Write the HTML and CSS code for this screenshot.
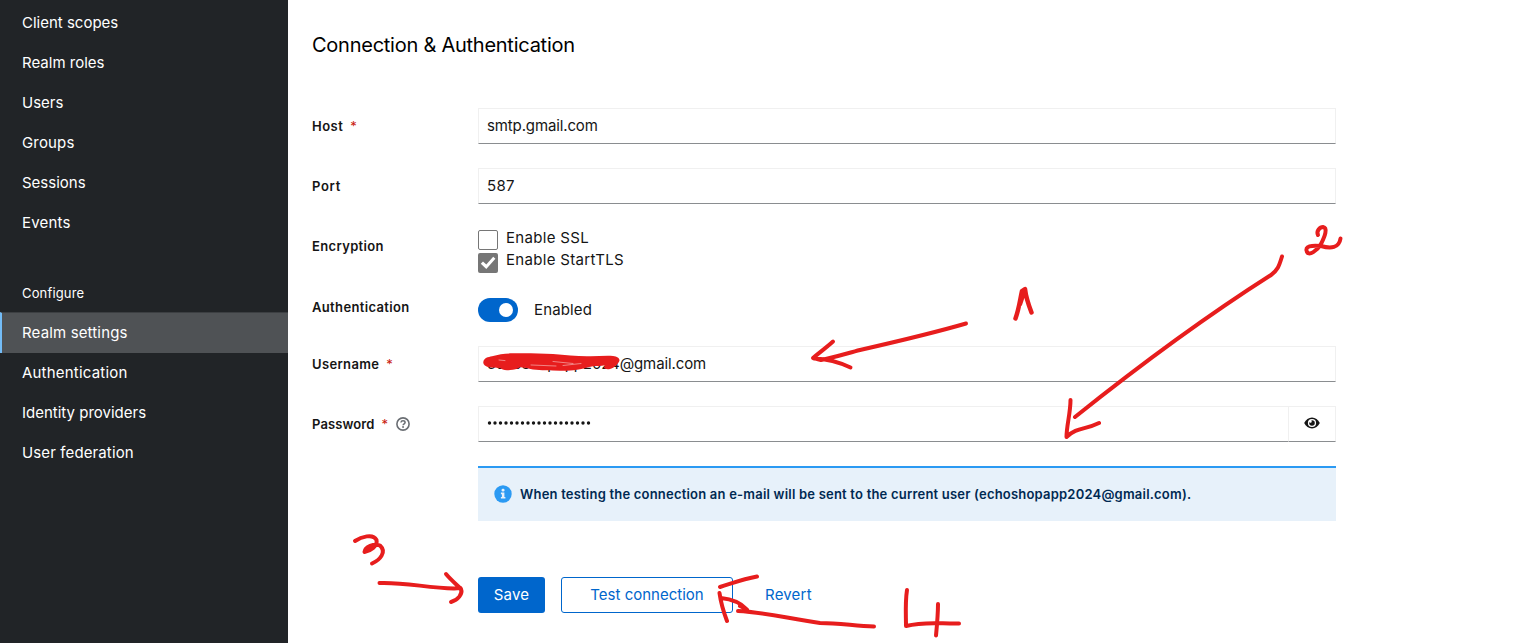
FILE: index.html
```html
<!DOCTYPE html>
<html lang="en">
<head>
<meta charset="utf-8">
<title>Realm settings</title>
<link rel="stylesheet" href="styles.css">
</head>
<body>
<div class="page">
  <nav class="sidebar">
    <a class="nav-item">Client scopes</a>
    <a class="nav-item">Realm roles</a>
    <a class="nav-item">Users</a>
    <a class="nav-item t-groups">Groups</a>
    <a class="nav-item">Sessions</a>
    <a class="nav-item t-events">Events</a>
    <h2 class="nav-title">Configure</h2>
    <a class="nav-item active t-settings">Realm settings</a>
    <a class="nav-item t-auth">Authentication</a>
    <a class="nav-item">Identity providers</a>
    <a class="nav-item t-fed">User federation</a>
  </nav>
  <main class="content">
    <h1 class="heading">Connection &amp; Authentication</h1>
    <form class="form">
      <div class="row">
        <div class="label"><span class="t-host">Host</span><span class="req">*</span></div>
        <div class="field"><span class="t-smtp">smtp.gmail.com</span></div>
      </div>
      <div class="row">
        <div class="label"><span class="t-port">Port</span></div>
        <div class="field"><span class="t-port-value">587</span></div>
      </div>
      <div class="row encryption">
        <div class="label"><span class="t-label">Encryption</span></div>
        <div class="checks">
          <div class="check"><span class="box"></span><span class="check-text">Enable SSL</span></div>
          <div class="check"><span class="box checked"><svg viewBox="0 0 20 20" width="20" height="20"><path d="M2.800 10.800l2.200-2.300 3.300 3.100 6.900-7.800 2.200 2-9.100 10.200z" fill="#fff"/></svg></span><span class="check-text">Enable StartTLS</span></div>
        </div>
      </div>
      <div class="row auth">
        <div class="label"><span class="t-label">Authentication</span></div>
        <div class="switch-line"><span class="switch"><span class="knob"></span></span><span class="t-enabled">Enabled</span></div>
      </div>
      <div class="row">
        <div class="label"><span class="t-label">Username</span><span class="req">*</span></div>
        <div class="field"><span class="t-mail">echoshopapp2024@gmail.com</span></div>
      </div>
      <div class="row">
        <div class="label"><span class="t-pass">Password</span><span class="req">*</span>
          <svg class="help" viewBox="0 0 14 14" width="14" height="14"><circle cx="7" cy="7" r="6.100" fill="none" stroke="#6a6e73" stroke-width="1.600"/><path d="M4.900 5.500C5.100 4.300 6 3.800 7 3.800c1.200 0 2.100.7 2.100 1.700C9.100 6.800 7.100 6.800 7.100 8.200" fill="none" stroke="#6a6e73" stroke-width="1.500"/><circle cx="7.050" cy="10" r=".95" fill="#6a6e73"/></svg>
        </div>
        <div class="password">
          <div class="field"><svg class="dots" width="106" height="4" viewBox="0 0 106 4"><path d="M2.500 2H105" stroke="#151515" stroke-width="3.400" stroke-linecap="round" stroke-dasharray="0 5.500"/></svg></div>
          <div class="reveal"><svg viewBox="0 0 16 12" width="16" height="12"><path d="M.2 6C1.800 2.700 4.700.6 8 .6s6.200 2.100 7.800 5.400c-1.600 3.300-4.500 5.400-7.800 5.400S1.800 9.300.2 6z" fill="#151515"/><circle cx="8" cy="6" r="4.100" fill="#fff"/><path d="M8 3.200A2.800 2.800 0 1 1 5.200 6c0-.3 0-.5.1-.7.3.3.7.4 1.100.4.8 0 1.300-.6 1.300-1.300 0-.5-.1-.8-.4-1.100z" fill="#151515"/></svg></div>
        </div>
      </div>
      <div class="alert">
        <svg class="info" viewBox="0 0 18 18" width="18" height="18"><circle cx="9" cy="9" r="8.700" fill="#2b9af3"/><rect x="7.600" y="3.700" width="2.900" height="2.800" rx="1.200" fill="#e7f1fa"/><path d="M6.900 7.500h3.500v4.400h1v1.700H6.900v-1.700h1V9.200h-1z" fill="#e7f1fa"/></svg>
        <span class="t-alert">When testing the connection an e-mail will be sent to the current user (echoshopapp2024@gmail.com).</span>
      </div>
      <div class="actions">
        <button type="button" class="btn primary">Save</button>
        <button type="button" class="btn secondary">Test connection</button>
        <button type="button" class="btn link">Revert</button>
      </div>
    </form>
  </main>
  <svg class="ink" viewBox="0 0 1533 643" width="1533" height="643">
    <path class="blob" d="M483.300 362C484 358 488 357 492 356.300C499 354 505 353.500 513 353.300C526 353 540 353.300 553 354C565 355 576 356 587 356.200C596 356.500 605 355.500 613 356C617 356.500 619.500 358 619.500 360.500C619 363 614 368.500 610 369C607 369.500 604 369 604 367.300L605 365.300C601 366 597 366 593 366.200C588 367 583 369 577 369.700C571 370.500 566 371 560 370.700C550 370.500 541 370.500 533 369.500C528 368.500 524 367.500 520 367.300C517 369 514 370 510 370C505 371 502 369.500 500 368C496 367.500 492 368 488 367C485 366 483 364.500 483.300 362Z"/>
    <g class="wisps"><path d="M499 360l6 .6M531 365l25 1M553 361.500l20 2M563 365.500l18-2"/></g>
    <path d="M966 323.500C930 334 895 342 860 350C845 354 832 358 821 360L813 358C819 353 827 347 833 341.500M814 358.500C829 359 841 363 850.500 367.500"/>
    <path stroke-width="4.500" d="M1015.500 318.500C1019 309 1020 300 1022 291L1025 289C1026 298 1029 306 1031.500 312.500M1024 292L1020 304"/>
    <path d="M1282 256.500C1279 266 1278 270 1271 275C1205 317 1140 365 1075 417M1070.500 400C1070.500 413 1066.500 426 1066.500 437C1077 427 1085 430 1099 423"/>
    <path d="M1318 235C1316 231 1320 227 1323 227C1328 228 1325 236 1321 244C1317 251 1309 256 1307 252C1304 246 1312 245 1321 246C1331 249 1339 248 1340.500 238.500"/>
    <path d="M355 541C361 537 373 533 376.500 540C378 546 370 551 364.500 552C365 547 374 543 380 545.500C387 552 380 560 372 563.500M366 550L375 545"/>
    <path d="M379.500 583C405 582 427 588 454 588.500L460.500 588M446 574C451 580 456 584 461 589C463 594 458 600 451 602"/>
    <path d="M757 576.500C743 579 733 583 720 587M719.500 593C721 604 724 613 727 621M721 598C731 599 740 602 747 609.500M746 609L740 606M738 611C764 612 790 619 820 623C840 623 855 626 874 626.500"/>
    <path d="M907 590C905 603 906 615 906 626C925 621 941 624 959 623.500M938 604C938 615 937 625 936 635.500"/>
  </svg>
</div>
</body>
</html>
```
FILE: styles.css
```css
* { box-sizing: border-box; }
body { margin: 0; background: #fff; color: #151515; font: 15px/24px Inter, "Noto Sans", sans-serif; overflow: hidden; }
.page { position: relative; display: flex; width: 1533px; height: 643px; overflow: hidden; }
.sidebar { flex: none; width: 288px; background: #212427; color: #fff; padding-top: 3px; }
.nav-item { display: flex; align-items: center; height: 40px; padding: 0 22px; white-space: nowrap; }
.nav-title { display: flex; align-items: center; height: 69px; margin: 0; padding: 31px 22px 0; font-size: 13px; font-weight: 400; letter-spacing: .15px; }
.active { background: #4f5255; border-left: 2px solid #73bcf7; padding: 0 20px 1px; height: 41px; border-top: 1px solid #3c3f42; }
.t-groups, .t-settings { letter-spacing: .15px; }
.t-events { letter-spacing: .2px; }
.t-auth { letter-spacing: .2px; }
.t-fed { letter-spacing: .12px; }
.content { flex: none; width: 1048px; margin-left: 24px; padding-top: 30px; }
.heading { margin: 0 0 48px; font-size: 20px; line-height: 30px; font-weight: 400; color: #000; letter-spacing: -.25px; white-space: nowrap; }
.form { display: flex; flex-direction: column; }
.row { display: grid; grid-template-columns: 166px 858px; height: 36px; margin-bottom: 24px; }
.label { display: flex; align-items: center; height: 36px; font-size: 13px; font-weight: 600; white-space: nowrap; }
.t-label { letter-spacing: .35px; }
.t-host { letter-spacing: .5px; }
.t-port { letter-spacing: .7px; }
.t-pass { letter-spacing: .12px; }
.req { color: #c9190b; font-weight: 400; font-size: 13px; margin-left: 7px; line-height: 16px; }
.help { margin-left: 8px; }
.field { display: flex; align-items: center; height: 36px; padding: 0 8px; border: 1px solid #f0f0f0; border-bottom-color: #8a8d90; white-space: nowrap; }
.t-smtp { letter-spacing: -.13px; }
.t-port-value { letter-spacing: .3px; }
.t-mail { letter-spacing: -.11px; }
.encryption { height: 46px; margin-bottom: 15px; }
.checks { padding-top: 2px; }
.check { display: flex; align-items: flex-start; height: 23px; }
.box { width: 20px; height: 20px; border: 1px solid #767676; border-radius: 2px; }
.checked { background: #767676; border: 0; }
.box svg { display: block; }
.check-text { margin: -4px 0 0 8px; letter-spacing: .32px; }
.check + .check .check-text { margin-top: -5px; }
.auth { height: 36px; margin-bottom: 21px; }
.switch-line { display: flex; align-items: center; height: 24px; margin-top: 9px; gap: 16px; }
.t-enabled { letter-spacing: .15px; }
.switch { display: flex; align-items: center; justify-content: flex-end; width: 40px; height: 24px; padding-right: 5px; border-radius: 12px; background: #06c; }
.knob { width: 14px; height: 14px; border-radius: 50%; background: #fff; }
.password { display: grid; grid-template-columns: 810px 48px; }
.password .field { border-right: 0; padding-bottom: 2px; }
.reveal { display: flex; align-items: center; justify-content: center; border: 1px solid #f0f0f0; border-bottom-color: #8a8d90; padding-bottom: 2px; }
.dots { display: block; }
.alert { display: flex; align-items: center; width: 858px; height: 55px; margin-left: 166px; padding: 0 16px 2px; border-top: 2px solid #2b9af3; background: #e7f1fa; color: #002952; font-size: 13px; font-weight: 600; white-space: nowrap; }
.t-alert { letter-spacing: .205px; }
.info { margin-right: 8px; }
.actions { display: flex; gap: 16px; margin: 56px 0 0 166px; }
.btn { height: 36px; padding: 0; border: 0; border-radius: 3px; font: inherit; white-space: nowrap; background: none; color: #06c; }
.primary { width: 67px; background: #06c; color: #fff; letter-spacing: .25px; }
.secondary { width: 172px; border: 1px solid #06c; }
.link { padding-left: 16px; letter-spacing: .2px; }
.ink { position: absolute; left: 0; top: 0; fill: none; stroke: #e71d1d; stroke-width: 4; stroke-linecap: round; stroke-linejoin: round; pointer-events: none; }
.blob { fill: #e71d1d; stroke: none; }
.wisps { stroke: #f6c9c9; stroke-width: .6; }
```
